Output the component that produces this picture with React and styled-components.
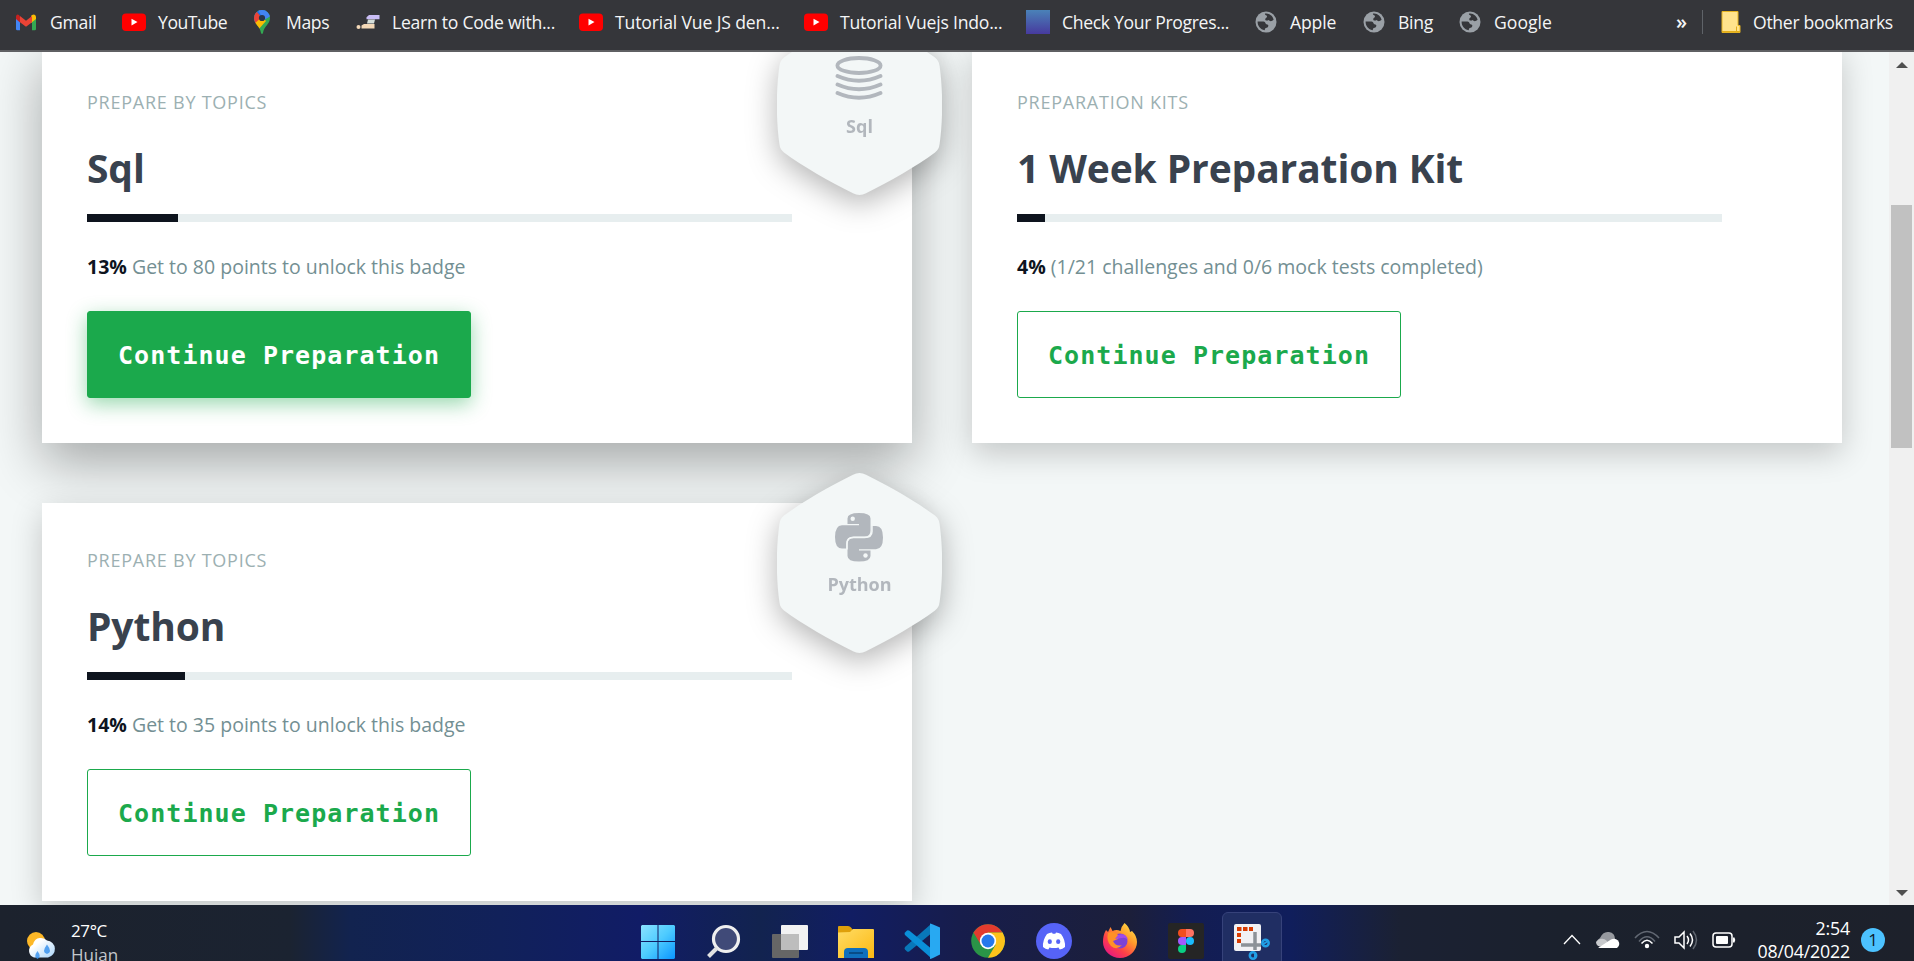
import React from "react";
import styled, { createGlobalStyle } from "styled-components";

const Global = createGlobalStyle`
  * { box-sizing: border-box; }
  body { margin: 0; background: #f3f7f7; overflow: hidden; font-family: "Open Sans", sans-serif; }
  svg { display: block; flex: none; }
`;

const Screen = styled.div`
  width: 1914px;
  height: 961px;
  display: flex;
  flex-direction: column;
  overflow: hidden;
`;

/* Bookmarks bar */
const BookmarksBar = styled.nav`
  flex: none;
  height: 52px;
  display: flex;
  align-items: center;
  padding: 0 16px 6px 14px;
  background: #35363a;
  border-bottom: 2px solid #5f6063;
  color: #f4f5f6;
`;
const Bookmark = styled.div`
  flex: none;
  width: ${(p) => p.$w}px;
  display: flex;
  align-items: center;
  gap: 12px;
  font-size: 17.6px;
  line-height: 24px;
  letter-spacing: ${(p) => p.$ls || 0}px;
  white-space: nowrap;
`;
const Chevrons = styled.div`
  margin-left: auto;
  font-size: 20px;
  font-weight: 600;
  line-height: 24px;
  padding-right: 15px;
`;
const BarDivider = styled.div`
  width: 1px;
  height: 24px;
  background: #5f6368;
  margin-right: 18px;
`;

/* Browser viewport */
const Viewport = styled.div`
  flex: none;
  height: 853px;
  display: flex;
  overflow: hidden;
`;
const Page = styled.main`
  flex: 1;
  height: 100%;
  overflow: hidden;
  background: #f3f7f7;
`;
const Grid = styled.div`
  display: grid;
  grid-template-columns: 870px 870px;
  grid-auto-rows: 398px;
  gap: 60px;
  margin: -7px 0 0 42px;
`;
const Card = styled.section`
  position: relative;
  z-index: ${(p) => (p.$raised ? 0 : 1)};
  background: #fff;
  padding: 45px;
  box-shadow: ${(p) =>
    p.$raised ? "0 20px 50px rgba(0,0,0,.32)" : "0 10px 30px rgba(0,0,0,.2)"};
`;
const Kicker = styled.div`
  font-size: 18px;
  line-height: 24px;
  letter-spacing: 0.76px;
  color: #9cb0b2;
  text-transform: uppercase;
`;
const Title = styled.h2`
  margin: 24px 0 0;
  font-size: 39px;
  line-height: 60px;
  font-weight: 700;
  letter-spacing: -0.12px;
  color: #39424e;
`;
const Track = styled.div`
  width: 705px;
  height: 8px;
  margin-top: 16px;
  background: #e7eeef;
`;
const Fill = styled.div`
  height: 100%;
  background: #0e141e;
`;
const Status = styled.p`
  margin: 29px 0 0;
  font-size: 19.5px;
  line-height: 32px;
  color: #738f93;
  b { color: #0e141e; font-weight: 700; }
`;
const Action = styled.button`
  display: flex;
  align-items: center;
  justify-content: center;
  width: 384px;
  height: 87px;
  margin-top: 28px;
  padding: 1px 0 0;
  border: 1px solid #1ba94c;
  border-radius: 3px;
  font: 700 25px "DejaVu Sans Mono", monospace;
  letter-spacing: 1.05px;
  color: ${(p) => (p.$solid ? "#fff" : "#1ba94c")};
  background: ${(p) => (p.$solid ? "#1ba94c" : "#fff")};
  box-shadow: ${(p) => (p.$solid ? "0 6px 20px rgba(27,169,76,.45)" : "none")};
`;
const Badge = styled.div`
  position: absolute;
  top: -30px;
  right: -30px;
  width: 165px;
  height: 180px;
  display: flex;
  flex-direction: column;
  align-items: center;
  padding-top: 39px;
  filter: drop-shadow(0 8px 15px rgba(0, 0, 0, 0.3));
  > svg:first-child { position: absolute; inset: 0; }
`;
const BadgeIcon = styled.div`
  position: relative;
  height: 50px;
  margin-right: 1px;
`;
const BadgeName = styled.div`
  position: relative;
  margin-top: 9px;
  font-size: 18px;
  line-height: 26px;
  font-weight: 700;
  color: #b2b7bd;
`;

/* Scrollbar */
const Scrollbar = styled.aside`
  flex: none;
  width: 25px;
  display: flex;
  flex-direction: column;
  align-items: center;
  justify-content: space-between;
  padding: 10px 0 9px;
  background: #f0f0f0;
`;
const Thumb = styled.div`
  width: 21px;
  height: 243px;
  margin: 137px 0 auto;
  background: #c1c1c1;
`;

/* Taskbar */
const Taskbar = styled.footer`
  flex: none;
  height: 56px;
  display: flex;
  align-items: flex-start;
  overflow: hidden;
  color: #fff;
  background: linear-gradient(90deg, #1c222d 0, #1b2331 290px, #12234f 350px, #11215a 500px, #111c66 640px,
    #12234f 760px, #111d63 850px, #171d4c 960px, #1c1f3a 1130px, #131d52 1190px, #101e5c 1290px,
    #1b2133 1400px, #1b212d 1560px, #1d212b 1914px);
`;
const Weather = styled.div`
  width: 625px;
  display: flex;
  padding: 25px 0 0 25px;
  gap: 12px;
`;
const WeatherText = styled.div`
  margin-top: -11px;
  font-size: 17px;
  line-height: 24px;
  letter-spacing: -0.4px;
  span { display: block; color: #c3c7cc; letter-spacing: 0; }
`;
const Apps = styled.div`
  display: flex;
`;
const AppSlot = styled.div`
  width: 66px;
  height: 56px;
  display: flex;
  justify-content: center;
  padding-top: 18px;
`;
const ActiveSlot = styled.div`
  width: 60px;
  height: 60px;
  margin: 7px 0 0 3px;
  padding: 11px 0 0 11px;
  border: 1px solid #36427a;
  border-radius: 6px;
  background: #202e63;
`;
const Tray = styled.div`
  margin-left: auto;
  display: flex;
  align-items: center;
  padding: 12px 29px 0 0;
`;
const TrayIcons = styled.div`
  display: flex;
  align-items: center;
  gap: 14px;
  margin-right: 21px;
`;
const Clock = styled.div`
  height: 46px;
  font-size: 17.8px;
  line-height: 23px;
  letter-spacing: -0.18px;
  text-align: right;
`;
const Notice = styled.div`
  width: 24px;
  height: 24px;
  margin-left: 11px;
  border-radius: 50%;
  background: #4cc2ff;
  color: #10202c;
  font-size: 17px;
  line-height: 24px;
  text-align: center;
`;

const Gmail = () => (
  <svg width="24" height="24" viewBox="0 0 24 24">
    <path d="M2 6.5V19q0 1.2 1.2 1.2H6V10z" fill="#4285f4" />
    <path d="M22 6.5V19q0 1.2-1.2 1.2H18V10z" fill="#34a853" />
    <path d="M18 6l1-1q3-1.500 4 1.500V9l-5 4z" fill="#fbbc04" transform="translate(-1 0)" />
    <path d="M6 6.500 5 5Q2.500 3.500 2 6.500V9l4 3.500z" fill="#c5221f" />
    <path d="M6 6l6 4.800L18 6v6.300l-6 4.500-6-4.500z" fill="#ea4335" />
  </svg>
);
const YouTube = () => (
  <svg width="24" height="24" viewBox="0 0 24 24">
    <rect x="0" y="3.500" width="24" height="17.500" rx="4" fill="#f00" />
    <path d="M9.500 8.700v6.800l6-3.400z" fill="#fff" />
  </svg>
);
const MapPin = () => (
  <svg width="24" height="24" viewBox="0 0 24 24">
    <defs>
      <clipPath id="pin"><path d="M12 0a8 8 0 0 1 8 8c0 6-6 8-7 15q-1 2-2 0C10 16 4 14 4 8a8 8 0 0 1 8-8z" /></clipPath>
    </defs>
    <g clipPath="url(#pin)">
      <path d="M0 0h24v24H0z" fill="#34a853" />
      <path d="M3 15 18 0H3z" fill="#1a73e8" />
      <path d="M2 3 7 2l5 6-8 8z" fill="#ea4335" />
      <path d="M3 15 12 7l4 4-8 9z" fill="#fbbc04" />
      <path d="M8 0h10l3 6-7 4-2-3z" fill="#4285f4" />
    </g>
    <circle cx="12" cy="8" r="3.100" fill="#28364b" />
  </svg>
);
const Learn = () => (
  <svg width="24" height="24" viewBox="0 0 24 24">
    <path d="M13 5h10.500v4.300H10.500V7.200z" fill="#c9bdf5" />
    <path d="M12 9.500h7l-1 4h-7z" fill="#d5ded9" />
    <path d="M8 14h10.500v4.500H5.500v-3z" fill="#f4d9b8" />
    <circle cx="2.500" cy="17" r="2" fill="#f4d9b8" />
  </svg>
);
const Tile = () => (
  <svg width="24" height="24" viewBox="0 0 24 24">
    <defs><linearGradient id="tile" x2="0" y2="1"><stop stopColor="#4a82b8" /><stop offset="1" stopColor="#473a9e" /></linearGradient></defs>
    <path d="M0 0h24v24H0z" fill="url(#tile)" />
  </svg>
);
const Globe = () => (
  <svg width="24" height="24" viewBox="0 0 24 24">
    <circle cx="12" cy="12" r="10.500" fill="#9aa0a6" />
    <path d="M11 3.500c4-.8 8 2.500 8.600 6.300-1.600 1.700-4 1.800-5 .2-1 .9-3 .8-3.400-.6-.3-1.500 2-1.700 1.800-3.200-.2-1.200-2.500-1-2-2.700z" fill="#35363a" />
    <path d="M3.600 11.500h5.900c2.400.3 1.500 2.800 3.700 3 2.300.2 1 3.700-1.500 3.500-.9.400-.5 1.800-1.200 2.300-4-.8-7-4.300-6.900-8.800z" fill="#35363a" />
  </svg>
);
const BookmarkFolder = () => (
  <svg width="20" height="24" viewBox="0 0 20 24">
    <path d="M1 1.500h16v14h2v7H1z" fill="#ffe38c" stroke="#e6b422" strokeWidth="1" />
    <path d="M1 21.500h18M15.500 22v-5.500" stroke="#e3ae1a" fill="none" />
  </svg>
);

const Hexagon = () => (
  <svg width="165" height="180" viewBox="0 0 165 180">
    <path
      d="M76 1.700Q82.500-1.700 89 1.700C112 13 140 29 158 42.500Q162 45.500 162.600 51C166 76 166 104 162.600 129Q162 134.500 158 137.500C140 151 112 167 89 178.300Q82.500 181.700 76 178.300C53 167 25 151 7 137.500Q3 134.500 2.400 129C-1 104-1 76 2.400 51Q3 45.500 7 42.500C25 29 53 13 76 1.700Z"
      fill="#f3f7f7"
    />
  </svg>
);
const Database = () => (
  <svg width="50" height="50" viewBox="0 0 50 50" fill="none" stroke="#b2b7bd" strokeWidth="3.800" strokeLinecap="round">
    <ellipse cx="25" cy="11.500" rx="21.600" ry="7.500" />
    <path d="M3.500 22q21.500 9.500 43 0M3.500 30.500q21.500 9.500 43 0M3.500 39q21.500 9.500 43 0" />
  </svg>
);
const Python = () => (
  <svg width="50" height="50" viewBox="0 0 50 50">
    <path d="M13.500 12V6.500Q13.500 1 25 1T36.500 6.500V18.500Q36.500 24.500 30.500 24.500H19.500Q12.300 24.500 12.300 31.500V36.500H8Q1 36.500 1 25T8 13.200H25V12Z" fill="#b2b7bd" />
    <path d="M13.500 12V6.500Q13.500 1 25 1T36.500 6.500V18.500Q36.500 24.500 30.500 24.500H19.500Q12.300 24.500 12.300 31.500V36.500H8Q1 36.500 1 25T8 13.200H25V12Z" fill="#b2b7bd" transform="rotate(180 25 25.200)" />
    <path d="M38 13v6.500q0 6-7.500 6h-11q-6.500 0-6.500 6v6" fill="none" stroke="#f3f7f7" strokeWidth="1.500" />
    <circle cx="18.700" cy="6.700" r="2.200" fill="#f3f7f7" />
    <circle cx="31.500" cy="43.500" r="2.200" fill="#f3f7f7" />
  </svg>
);
const Arrow = ({ down }) => (
  <svg width="12" height="6" viewBox="0 0 12 6">
    <path d={down ? "M0 0h12L6 6z" : "M0 6h12L6 0z"} fill="#505050" />
  </svg>
);

const Rain = () => (
  <svg width="34" height="34" viewBox="0 0 34 34">
    <defs><linearGradient id="cloud" x2="1" y2="1"><stop offset=".3" stopColor="#fff" /><stop offset="1" stopColor="#a9d4fa" /></linearGradient></defs>
    <circle cx="11" cy="11" r="9" fill="#fdb827" />
    <path d="M9 27.500a7 7 0 0 1-1-13Q10 7 16 8q4 0 6 2.500a8.600 8.600 0 0 1 1 17z" fill="url(#cloud)" />
    <path d="M22 14.500q-6 8 0 9.500 6-1.500 0-9.500zM12.500 21q-4.500 6 0 8 4.500-2 0-8z" fill="#3b93ed" opacity=".85" />
  </svg>
);
const Windows = () => (
  <svg width="36" height="36" viewBox="0 0 36 36">
    <defs><linearGradient id="win" x2="1" y2="1"><stop stopColor="#8be2ff" /><stop offset=".5" stopColor="#4dcbff" /><stop offset="1" stopColor="#0a95ff" /></linearGradient></defs>
    <path d="M2 2h15.500v16H1V3zM18.500 2H34l1 1v15H18.500zM1 19h16.500v17H2l-1-1zM18.500 19H35v16l-1 1H18.500z" fill="url(#win)" />
  </svg>
);
const Search = () => (
  <svg width="36" height="36" viewBox="0 0 36 36">
    <circle cx="20" cy="16" r="12.500" fill="#404a78" stroke="#efefef" strokeWidth="3.200" />
    <path d="m11 25-8.500 8.500" stroke="#e2e2e2" strokeWidth="4" />
  </svg>
);
const TaskView = () => (
  <svg width="38" height="36" viewBox="0 0 38 36">
    <rect x="1" y="11" width="27" height="24" rx="1" fill="#666" />
    <rect x="10" y="2" width="27" height="25" rx="1" fill="#f2f2f2" />
    <path d="M10 11h18v16H10z" fill="#bdbdbd" />
  </svg>
);
const Explorer = () => (
  <svg width="36" height="36" viewBox="0 0 36 36">
    <defs><linearGradient id="fold" x2="1" y2="1"><stop stopColor="#ffdc65" /><stop offset="1" stopColor="#fcb912" /></linearGradient></defs>
    <path d="M0 4q0-1 1-1h9q2 0 3 1.500L15 7v4H0z" fill="#dfa00a" />
    <path d="M0 9.500 12 9l3-3h20q1 0 1 1v28H0z" fill="url(#fold)" />
    <path d="M6 35v-6q0-4 4-4h16q4 0 4 4v6z" fill="#0f6fbd" />
    <path d="M11 30h14" stroke="#084c87" strokeWidth="2" />
  </svg>
);
const VSCode = () => (
  <svg width="36" height="36" viewBox="0 0 36 36">
    <path d="M27 1 1 24q-1 1.500 0 2.500l2 2q1 .8 2.500-.2L29 9z" fill="#0877b9" />
    <path d="m27 35L1 12q-1-1.500 0-2.500l2-2q1-.8 2.500.2L29 27z" fill="#0a8fd8" />
    <path d="M26 .5q1 0 10 4V31.500q-9 4.500-10 4.500V.5z" fill="#28a9f2" />
  </svg>
);
const Chrome = () => (
  <svg width="36" height="36" viewBox="0 0 36 36">
    <circle cx="18" cy="18" r="16.800" fill="#2a9447" />
    <path d="M3.500 9.600A16.800 16.800 0 0 1 32.500 9.600H18L11 22z" fill="#e33b2e" />
    <path d="M32.600 9.600A16.800 16.800 0 0 1 18 34.800L25.500 22 18 9.600z" fill="#fcc21b" />
    <circle cx="18" cy="18" r="8.200" fill="#fff" />
    <circle cx="18" cy="18" r="6.500" fill="#2678ec" />
  </svg>
);
const Discord = () => (
  <svg width="36" height="36" viewBox="0 0 36 36">
    <circle cx="18" cy="18" r="18" fill="#5663f7" />
    <path d="M11 11q2.500-1.300 5-1.500l.7 1.300h2.600l.7-1.300q2.500.2 5 1.500 4.500 6 4 13-2.500 2-5.300 2.500l-1.200-2q-4.500 1.200-9 0l-1.200 2Q9.500 26 7 24q-.5-7 4-13z" fill="#fff" />
    <ellipse cx="13.800" cy="18.700" rx="2.100" ry="2.400" fill="#5663f7" />
    <ellipse cx="22.200" cy="18.700" rx="2.100" ry="2.400" fill="#5663f7" />
  </svg>
);
const Firefox = () => (
  <svg width="36" height="36" viewBox="0 0 36 36">
    <defs>
      <linearGradient id="fx" x1="1" y1="0" x2=".2" y2="1"><stop stopColor="#fff44f" /><stop offset=".4" stopColor="#ff9a2b" /><stop offset=".7" stopColor="#ff4048" /><stop offset="1" stopColor="#e31587" /></linearGradient>
    </defs>
    <path d="M22.500 0q5 4 5.500 9l2-1q5 5 5 11a17 16 0 0 1-34 0q0-7 3-12l2 2 2.500-5 2 4q4-2 8 0 1-5 4-8z" fill="url(#fx)" />
    <circle cx="18" cy="18" r="7.500" fill="#7c42d6" />
    <path d="M6 10q6-3 11 3l-1 3-5 2q3 6 9 4-5 6-11 1-5-5-3-13z" fill="#ff9126" />
    <path d="M16 12q8-3 10 5-3-3-6-2l-7 1z" fill="#a14be8" />
  </svg>
);
const Figma = () => (
  <svg width="36" height="36" viewBox="0 0 36 36">
    <rect width="36" height="36" rx="2" fill="#252525" />
    <path d="M18 6h-4a4 4 0 0 0 0 8h4z" fill="#f24e1e" />
    <path d="M18 6h4a4 4 0 0 1 0 8h-4z" fill="#ff7262" />
    <path d="M18 14h-4a4 4 0 0 0 0 8h4z" fill="#a259ff" />
    <circle cx="22" cy="18" r="4" fill="#1abcfe" />
    <path d="M18 22h-4a4 4 0 1 0 4 4z" fill="#0acf83" />
  </svg>
);
const Snip = () => (
  <svg width="38" height="36" viewBox="0 0 38 36">
    <rect width="27" height="27" rx="2" fill="#f1f1f4" />
    <path d="M3 5h4.500m1.500 0h4.500m1.500 0H19M3 11h4m-4 6h4" stroke="#d83b01" strokeWidth="4" />
    <path d="M21 8v18M7 21h20" stroke="#8c9298" strokeWidth="3.500" />
    <circle cx="31.500" cy="19" r="3.200" fill="none" stroke="#219fe6" strokeWidth="2.500" />
    <circle cx="19" cy="31.500" r="3.200" fill="none" stroke="#219fe6" strokeWidth="2.500" />
    <path d="m28 21 6-4M21 28v5" stroke="#219fe6" strokeWidth="2" />
  </svg>
);
const Caret = () => (
  <svg width="18" height="24" viewBox="0 0 18 24"><path d="m1 16 8-8.500L17 16" fill="none" stroke="#fff" strokeWidth="1.300" /></svg>
);
const Cloud = () => (
  <svg width="25" height="24" viewBox="0 0 25 24">
    <path d="M5 19a5 5 0 0 1 0-9Q8 3 14 4t6 7l-8 4z" fill="#96999f" />
    <path d="M3 18q-4-4 0-6 5-3 9 1l3 6z" fill="#c8cacd" />
    <path d="M3 20 16 11.500q4-2 7 1 3 4.500-1 7.500H4z" fill="#fff" />
  </svg>
);
const Wifi = () => (
  <svg width="26" height="24" viewBox="0 0 26 24" fill="none" strokeWidth="1.500">
    <path d="M1 10Q13-3 25 10M5 13.500Q13 4 21 13.500" stroke="#626873" />
    <path d="M7.500 15.500q5.500-6.500 11 0" stroke="#fff" /><circle cx="13" cy="18" r="2.200" fill="#fff" />
  </svg>
);
const Speaker = () => (
  <svg width="24" height="24" viewBox="0 0 24 24" fill="none" stroke="#fff" strokeWidth="1.500">
    <path d="M1 9h4l5-5v16l-5-5H1zM13 8q3 4 0 8M16 5.500q5 6.500 0 13" /><path d="M19 3q7 9 0 18" stroke="#5e646e" />
  </svg>
);
const Battery = () => (
  <svg width="24" height="24" viewBox="0 0 24 24">
    <rect x="1" y="5" width="19" height="14" rx="3" fill="none" stroke="#fff" strokeWidth="1.500" />
    <rect x="4" y="8" width="12" height="8" rx="1" fill="#fff" /><path d="M21 9.500h1.500q1.500 2.500 0 5H21z" fill="#fff" />
  </svg>
);

const bookmarks = [
  { label: "Gmail", icon: Gmail, w: 108, ls: -0.25 },
  { label: "YouTube", icon: YouTube, w: 128, ls: -0.45 },
  { label: "Maps", icon: MapPin, w: 106, ls: -0.4 },
  { label: "Learn to Code with...", icon: Learn, w: 223, ls: -0.27 },
  { label: "Tutorial Vue JS den...", icon: YouTube, w: 225, ls: -0.14 },
  { label: "Tutorial Vuejs Indo...", icon: YouTube, w: 222, ls: -0.22 },
  { label: "Check Your Progres...", icon: Tile, w: 228, ls: -0.34 },
  { label: "Apple", icon: Globe, w: 108, ls: -0.15 },
  { label: "Bing", icon: Globe, w: 96, ls: -0.25 },
  { label: "Google", icon: Globe, w: 100, ls: 0 },
];

const cards = [
  { kicker: "Prepare by topics", title: "Sql", pct: 13, fill: 91, text: "Get to 80 points to unlock this badge", badge: Database, raised: true },
  { kicker: "Preparation kits", title: "1 Week Preparation Kit", pct: 4, fill: 28, text: "(1/21 challenges and 0/6 mock tests completed)" },
  { kicker: "Prepare by topics", title: "Python", pct: 14, fill: 98, text: "Get to 35 points to unlock this badge", badge: Python },
];

const apps = [Windows, Search, TaskView, Explorer, VSCode, Chrome, Discord, Firefox, Figma];

export default function App() {
  return (
    <Screen>
      <Global />
      <BookmarksBar>
        {bookmarks.map(({ label, icon: Icon, w, ls }) => (
          <Bookmark key={label} $w={w} $ls={ls}><Icon />{label}</Bookmark>
        ))}
        <Chevrons>»</Chevrons>
        <BarDivider />
        <Bookmark $w={177} $ls={-0.3}><BookmarkFolder />Other bookmarks</Bookmark>
      </BookmarksBar>
      <Viewport>
        <Page>
          <Grid>
            {cards.map(({ kicker, title, pct, fill, text, badge: Icon, raised }) => (
              <Card key={title} $raised={raised}>
                <Kicker>{kicker}</Kicker>
                <Title>{title}</Title>
                <Track><Fill style={{ width: fill }} /></Track>
                <Status><b>{pct}%</b> {text}</Status>
                <Action $solid={raised}>Continue Preparation</Action>
                {Icon && (
                  <Badge>
                    <Hexagon />
                    <BadgeIcon><Icon /></BadgeIcon>
                    <BadgeName>{title}</BadgeName>
                  </Badge>
                )}
              </Card>
            ))}
          </Grid>
        </Page>
        <Scrollbar><Arrow /><Thumb /><Arrow down /></Scrollbar>
      </Viewport>
      <Taskbar>
        <Weather>
          <Rain />
          <WeatherText>27°C<span>Hujan</span></WeatherText>
        </Weather>
        <Apps>
          {apps.map((Icon, i) => <AppSlot key={i}><Icon /></AppSlot>)}
          <ActiveSlot><Snip /></ActiveSlot>
        </Apps>
        <Tray>
          <TrayIcons><Caret /><Cloud /><Wifi /><Speaker /><Battery /></TrayIcons>
          <Clock>2:54<br />08/04/2022</Clock>
          <Notice>1</Notice>
        </Tray>
      </Taskbar>
    </Screen>
  );
}
